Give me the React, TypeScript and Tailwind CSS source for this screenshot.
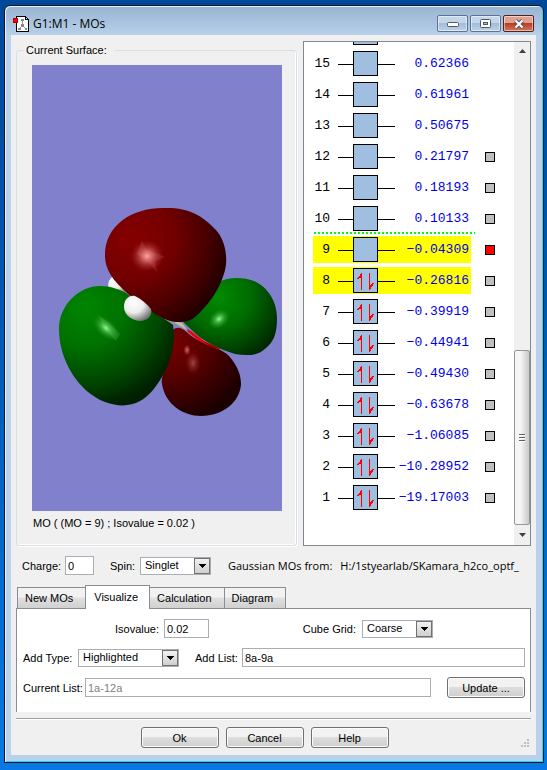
import { useState } from "react";
import type { ReactNode } from "react";

type Orbital = {
  id: number;
  energy: string;
  occupied?: boolean;
  highlighted?: boolean;
  surface?: "none" | "current";
};

const orbitals: Orbital[] = [
  { id: 15, energy: "0.62366" },
  { id: 14, energy: "0.61961" },
  { id: 13, energy: "0.50675" },
  { id: 12, energy: "0.21797", surface: "none" },
  { id: 11, energy: "0.18193", surface: "none" },
  { id: 10, energy: "0.10133", surface: "none" },
  { id: 9, energy: "−0.04309", highlighted: true, surface: "current" },
  { id: 8, energy: "−0.26816", occupied: true, highlighted: true, surface: "none" },
  { id: 7, energy: "−0.39919", occupied: true, surface: "none" },
  { id: 6, energy: "−0.44941", occupied: true, surface: "none" },
  { id: 5, energy: "−0.49430", occupied: true, surface: "none" },
  { id: 4, energy: "−0.63678", occupied: true, surface: "none" },
  { id: 3, energy: "−1.06085", occupied: true, surface: "none" },
  { id: 2, energy: "−10.28952", occupied: true, surface: "none" },
  { id: 1, energy: "−19.17003", occupied: true, surface: "none" },
];

const tabs = ["New MOs", "Visualize", "Calculation", "Diagram"];

function OrbitalIcon({ occupied }: { occupied?: boolean }) {
  return (
    <svg width="57" height="25" viewBox="0 0 57 25" className="shrink-0" shapeRendering="crispEdges">
      <path d="M0 13.5h57" stroke="#000" />
      <rect x="15.5" y="0.5" width="24" height="24" fill="#a0bfe0" stroke="#000" />
      {occupied && (
        <g fill="#f00">
          <path d="M23 5h1v17h-1zM22 6h1v4h-1zM21 8h1v2h-1zM20 9h1v2h-1zM19 10h1v1h-1z" />
          <path d="M31 5h1v17h-1zM32 17h1v4h-1zM33 16h1v3h-1zM34 15h1v3h-1zM35 15h1v1h-1z" />
        </g>
      )}
    </svg>
  );
}

function OrbitalRow({ orbital }: { orbital: Orbital }) {
  return (
    <li className="relative flex h-[31px] items-center pl-[9px]">
      <div
        className={`flex h-[27px] w-[158px] items-center ${
          orbital.highlighted ? "bg-[#ffff00]" : ""
        }`}
      >
        <span className="w-[17px] text-right">{orbital.id}</span>
        <span className="ml-2 flex">
          <OrbitalIcon occupied={orbital.occupied} />
        </span>
        <span className="flex-1 pr-0.5 text-right whitespace-nowrap text-[#0000e8]">
          {orbital.energy}
        </span>
      </div>
      {orbital.surface && (
        <input
          type="checkbox"
          aria-label={`Surface for MO ${orbital.id}`}
          defaultChecked={orbital.surface === "current"}
          className="ml-[14px] size-[10px] appearance-none border border-black bg-[#c0c0c0] checked:bg-[#ff0000]"
        />
      )}
      {/* HOMO / LUMO boundary */}
      {orbital.id === 10 && (
        <div className="absolute bottom-0 left-[10px] h-[2px] w-[161px] bg-[repeating-linear-gradient(90deg,#00ff00_0_2px,transparent_2px_4px)]" />
      )}
    </li>
  );
}

function Surface() {
  return (
    <svg width="250" height="446" viewBox="32 65 250 446" className="shrink-0">
      <defs>
        <radialGradient id="redTop" gradientUnits="userSpaceOnUse" cx="132" cy="238" r="100">
          <stop offset="0" stopColor="#850000" />
          <stop offset="0.4" stopColor="#740000" />
          <stop offset="0.75" stopColor="#480000" />
          <stop offset="1" stopColor="#200000" />
        </radialGradient>
        <radialGradient id="redBottom" gradientUnits="userSpaceOnUse" cx="172" cy="342" r="78">
          <stop offset="0" stopColor="#760000" />
          <stop offset="0.45" stopColor="#560000" />
          <stop offset="1" stopColor="#1c0000" />
        </radialGradient>
        <radialGradient id="greenLeft" gradientUnits="userSpaceOnUse" cx="86" cy="308" r="100">
          <stop offset="0" stopColor="#008600" />
          <stop offset="0.4" stopColor="#007000" />
          <stop offset="0.75" stopColor="#004500" />
          <stop offset="1" stopColor="#002000" />
        </radialGradient>
        <radialGradient id="greenRight" gradientUnits="userSpaceOnUse" cx="220" cy="297" r="68">
          <stop offset="0" stopColor="#008a00" />
          <stop offset="0.45" stopColor="#006c00" />
          <stop offset="1" stopColor="#002600" />
        </radialGradient>
        <radialGradient id="hydrogen" cx="0.35" cy="0.3" r="0.75">
          <stop offset="0" stopColor="#fff" />
          <stop offset="0.5" stopColor="#ececec" />
          <stop offset="1" stopColor="#707070" />
        </radialGradient>
        <radialGradient id="shineRed">
          <stop offset="0" stopColor="#ffa8a8" />
          <stop offset="0.35" stopColor="#e07070" stopOpacity="0.75" />
          <stop offset="1" stopColor="#a02020" stopOpacity="0" />
        </radialGradient>
        <radialGradient id="shineGreen">
          <stop offset="0" stopColor="#98ff98" />
          <stop offset="0.35" stopColor="#58c858" stopOpacity="0.7" />
          <stop offset="1" stopColor="#209020" stopOpacity="0" />
        </radialGradient>
      </defs>

      <circle cx="118" cy="285" r="10" fill="url(#hydrogen)" />
      <path
        d="M173 330C178 325 184 329 190 335C203 345 222 348 229 356C236 364 241 373 241 384C240 402 223 416 201 416C183 416 165 404 162 384C160 374 174 350 173 330Z"
        fill="url(#redBottom)"
      />
      <path
        d="M183 322C196 315 208 301 219 282C228 277 243 277 254 281C268 287 277 302 277 318C277 335 273 342 266 348C258 356 247 356 235 354C219 349 205 342 196 334Z"
        fill="url(#greenRight)"
      />
      <path
        d="M100 286C79 286 59 305 59 329C59 361 79 392 105 402C127 410 142 403 153 390C167 373 177 348 173 325C160 314 144 305 130 296C122 289 109 286 100 286Z"
        fill="url(#greenLeft)"
      />
      <path d="M151 311L172 321L183 322L188 330L185 330L171 323Z" fill="#909090" />
      <path d="M172 321L182 323L187 330L182 327Z" fill="#c0c0c0" />
      <path d="M187 329L191 331L204 341L221 349L214 348L199 341L188 332Z" fill="#f00000" />
      <path d="M201 340L207 343L222 349L213 348Z" fill="#900000" />
      <path
        d="M105 257C104 226 131 208 163 208C188 207 202 215 216 230C224 239 227 252 226 265C224 279 215 297 203 309C195 318 190 322 180 322C164 323 148 309 134 299C119 286 106 275 105 257Z"
        fill="url(#redTop)"
      />
      <path
        d="M124 307C124 299 129 295 135 296C141 299 147 304 151 309C153 316 147 321 140 321C134 321 124 316 124 307Z"
        fill="url(#hydrogen)"
      />
      <ellipse cx="147" cy="256" rx="17" ry="16" fill="url(#shineRed)" />
      <path d="M142 240l4 9l19 8l-10 4l2 11l-10-11l-10-7l3-9z" fill="#f09090" opacity="0.15" />
      <ellipse
        cx="106"
        cy="328"
        rx="16"
        ry="9"
        transform="rotate(42 106 328)"
        fill="url(#shineGreen)"
      />
      <path d="M98 315l11 8l11 11l-4 7l-10-10z" fill="#80d880" opacity="0.18" />
      <ellipse
        cx="219"
        cy="319"
        rx="12"
        ry="9"
        transform="rotate(-40 219 319)"
        fill="url(#shineGreen)"
      />
      <ellipse cx="187" cy="350" rx="4" ry="6" fill="url(#shineRed)" opacity="0.7" />
      <ellipse cx="193" cy="363" rx="8" ry="12" fill="url(#shineRed)" opacity="0.4" />
    </svg>
  );
}

function TitleIcon() {
  return (
    <svg width="16" height="16" viewBox="0 0 16 16" shapeRendering="crispEdges">
      <path d="M3.5 0.5h9l3 3v12h-12z" fill="#fff" stroke="#000" />
      <path d="M12 1h1v2h2v1h-3z" fill="#000" />
      <path d="M9.5 5v5M9 10l-3 3M10 10l3 3" stroke="#999" fill="none" />
      <path d="M8 3h3v2H8zM8 8h3v3H8zM5 12h3v2H5zM12 12h2v2h-2z" fill="#888" />
      <path d="M0.5 2.5h4v4h-4z" fill="#f00" stroke="#b00000" />
    </svg>
  );
}

function WindowButton({
  label,
  danger,
  children,
}: {
  label: string;
  danger?: boolean;
  children: ReactNode;
}) {
  return (
    <button
      aria-label={label}
      className={`flex h-[17px] w-[31px] items-center justify-center rounded-[2px] border shadow-[inset_0_0_0_1px_#ffffff80] ${
        danger
          ? "border-[#52201f] bg-linear-to-b from-[#e0a090] from-45% via-[#b83c24] via-50% to-[#d07858]"
          : "border-[#5d7391] bg-linear-to-b from-[#c4d6e9] from-45% via-[#a3bcd7] via-50% to-[#bcd2e8]"
      }`}
    >
      {children}
    </button>
  );
}

function Select({
  id,
  options,
  className,
}: {
  id: string;
  options: string[];
  className: string;
}) {
  return (
    <div className={`relative h-[18px] shrink-0 ${className}`}>
      <select
        id={id}
        className="h-full w-full appearance-none border border-[#abadb3] bg-white pb-0.5 pl-1"
      >
        {options.map((option) => (
          <option key={option}>{option}</option>
        ))}
      </select>
      <span className="pointer-events-none absolute top-px right-px flex size-4 items-center justify-center border border-[#707070] bg-linear-to-b from-[#f2f2f2] to-[#cfcfcf]">
        <svg width="7" height="4" viewBox="0 0 7 4" shapeRendering="crispEdges">
          <path d="M0 0h7v1H0zM1 1h5v1H1zM2 2h3v1H2zM3 3h1v1H3z" />
        </svg>
      </span>
    </div>
  );
}

function TextBox({
  id,
  value,
  className,
  disabled,
}: {
  id: string;
  value: string;
  className: string;
  disabled?: boolean;
}) {
  return (
    <input
      id={id}
      type="text"
      defaultValue={value}
      disabled={disabled}
      className={`h-[19px] min-w-0 border border-[#abadb3] bg-white px-0.5 disabled:text-[#808080] ${className}`}
    />
  );
}

function PushButton({ children }: { children: ReactNode }) {
  return (
    <button className="h-[21px] w-[78px] shrink-0 rounded-[3px] border border-[#707070] bg-linear-to-b from-[#f2f2f2] from-45% via-[#dddddd] via-50% to-[#cfcfcf] shadow-[inset_0_0_0_1px_#fcfcfc]">
      {children}
    </button>
  );
}

export default function App() {
  const [activeTab, setActiveTab] = useState("Visualize");

  return (
    <div className="min-h-screen bg-linear-to-b from-[#00489a] via-[#0058b4] via-40% to-[#0878e4] pt-[5px] pr-[3px] pb-[7px] pl-1 font-['Liberation_Sans',Arial,sans-serif] text-[11px] leading-[14px] text-black">
      <div className="rounded-t-md border border-[#101828] bg-linear-to-b from-[#98b4d2] to-[#b9d1ea] to-[30px] pr-[7px] pb-[7px] pl-1.5 shadow-[inset_1px_1px_0_#e4f0fa,inset_-1px_-1px_0_#30d0f0]">
        <header className="flex h-[29px] items-center pt-1.5 pr-0.5 pl-0.5">
          <TitleIcon />
          <h1 className="ml-1 flex-1 font-['Open_Sans',sans-serif] text-[12px]">G1:M1 - MOs</h1>
          <div className="flex gap-0.5">
            <WindowButton label="Minimize">
              <svg width="12" height="6" viewBox="0 0 12 6">
                <rect x="0.5" y="1.5" width="11" height="4" rx="1" fill="#fff" stroke="#535666" />
              </svg>
            </WindowButton>
            <WindowButton label="Maximize">
              <svg width="11" height="9" viewBox="0 0 11 9">
                <rect x="0.5" y="0.5" width="10" height="8" rx="1" fill="#fff" stroke="#535666" />
                <rect x="3.5" y="3.5" width="4" height="2" fill="#a3bcd7" stroke="#535666" />
              </svg>
            </WindowButton>
            <WindowButton label="Close" danger>
              <svg width="12" height="10" viewBox="0 0 12 10">
                <path d="M2.5 1.5l7 7M9.5 1.5l-7 7" stroke="#535666" strokeWidth="4" />
                <path d="M2.5 1.5l7 7M9.5 1.5l-7 7" stroke="#fff" strokeWidth="2" />
              </svg>
            </WindowButton>
          </div>
        </header>

        <main className="bg-[#f0f0f0] px-[5px] pt-1.5 pb-[7px]">
          <div className="flex gap-1.5">
            <fieldset className="mt-0.5 min-w-0 flex-1 rounded-[3px] border border-[#d5dfe5] pt-2 pr-[14px] pl-[15px] shadow-[inset_-1px_-1px_0_#fff,1px_1px_0_#fff]">
              <legend className="-ml-2 pr-2 pl-0.5">Current Surface:</legend>
              <div className="flex justify-center overflow-hidden bg-[#8080cc]">
                <Surface />
              </div>
              <p className="mt-[5px] pl-px">MO ( (MO = 9) ; Isovalue = 0.02 )</p>
            </fieldset>

            <section className="flex w-[228px] border border-[#828790] bg-white">
              <div className="flex-1 pb-8 font-['Liberation_Mono','Courier_New',monospace] text-[13px]">
                <div className="flex h-1.5 flex-col justify-end overflow-hidden pb-[3px] pl-[49px]">
                  <div className="h-[3px] w-[25px] border border-t-0 border-black bg-[#a0bfe0]" />
                </div>
                <ul>
                  {orbitals.map((orbital) => (
                    <OrbitalRow key={orbital.id} orbital={orbital} />
                  ))}
                </ul>
              </div>
              <div className="flex w-4 flex-col bg-[#f0f0f0]">
                <button aria-label="Scroll up" className="flex h-[17px] items-center justify-center">
                  <svg width="7" height="4" viewBox="0 0 7 4">
                    <path d="M3.5 0L7 4H0z" fill="#404040" />
                  </svg>
                </button>
                <div className="flex-1" />
                <div className="flex h-[175px] flex-col items-center justify-center gap-px rounded-[2px] border border-[#979797] bg-linear-to-r from-[#f5f5f5] from-40% to-[#c8c8cc]">
                  <span className="h-[2px] w-1.5 border-t border-[#606060] bg-white" />
                  <span className="h-[2px] w-1.5 border-t border-[#606060] bg-white" />
                  <span className="h-[2px] w-1.5 border-t border-[#606060] bg-white" />
                </div>
                <button
                  aria-label="Scroll down"
                  className="flex h-5 items-center justify-center"
                >
                  <svg width="7" height="4" viewBox="0 0 7 4">
                    <path d="M3.5 4L7 0H0z" fill="#404040" />
                  </svg>
                </button>
              </div>
            </section>
          </div>

          <div className="mt-2.5 flex h-[19px] items-center pl-1.5">
            <label htmlFor="charge" className="w-[43px] shrink-0">
              Charge:
            </label>
            <TextBox id="charge" value="0" className="w-[29px] shrink-0" />
            <label htmlFor="spin" className="ml-4 w-[30px] shrink-0">
              Spin:
            </label>
            <Select id="spin" options={["Singlet", "Triplet"]} className="w-[71px]" />
            <p className="ml-[17px] flex gap-2 font-['Open_Sans',sans-serif] whitespace-nowrap">
              <span>Gaussian MOs from:</span>
              <span>H:/1styearlab/SKamara_h2co_optf_</span>
            </p>
          </div>

          <div role="tablist" className="mt-2.5 flex h-[23px] items-end pl-px">
            {tabs.map((tab) => (
              <button
                key={tab}
                role="tab"
                aria-selected={activeTab === tab}
                onClick={() => setActiveTab(tab)}
                className={
                  activeTab === tab
                    ? "relative -mr-px -mb-px h-6 border border-b-0 border-[#898c95] bg-white pr-[11px] pb-0.5 pl-2"
                    : "-mr-px h-[21px] border border-b-0 border-[#898c95] bg-linear-to-b from-[#f2f2f2] from-45% via-[#e0e0e0] via-50% to-[#d0d0d0] pr-3 pl-[7px]"
                }
              >
                {tab}
              </button>
            ))}
          </div>

          <div
            role="tabpanel"
            className="flex flex-col gap-2.5 border border-b-0 border-[#898c95] bg-white pt-2.5 pr-[5px] pb-3.5 pl-1.5"
          >
            <div className="flex items-center px-[92px]">
              <label htmlFor="isovalue" className="w-[49px]">
                Isovalue:
              </label>
              <TextBox id="isovalue" value="0.02" className="w-[45px]" />
              <label htmlFor="grid" className="mr-1.5 ml-auto">
                Cube Grid:
              </label>
              <Select id="grid" options={["Coarse", "Medium", "Fine"]} className="w-[71px]" />
            </div>
            <div className="flex items-center">
              <label htmlFor="addType" className="w-[55px] whitespace-nowrap">
                Add Type:
              </label>
              <Select
                id="addType"
                options={["Highlighted", "Occupied", "Virtual"]}
                className="w-[101px]"
              />
              <label htmlFor="addList" className="ml-4 w-[47px] whitespace-nowrap">
                Add List:
              </label>
              <TextBox id="addList" value="8a-9a" className="flex-1" />
            </div>
            <div className="flex items-center">
              <label htmlFor="currentList" className="w-[62px] whitespace-nowrap">
                Current List:
              </label>
              <TextBox id="currentList" value="1a-12a" className="mr-4 flex-1" disabled />
              <PushButton>Update ...</PushButton>
            </div>
          </div>

          <hr className="mt-1.5 h-[2px] border-t border-[#a0a0a0] bg-white" />

          <footer className="mt-[7px] flex items-end">
            <div className="flex flex-1 justify-center gap-[7px]">
              <PushButton>Ok</PushButton>
              <PushButton>Cancel</PushButton>
              <PushButton>Help</PushButton>
            </div>
            <svg width="18" height="10" viewBox="0 0 18 10" shapeRendering="crispEdges">
              <path
                d="M14 1h2v2h-2zM11 4h2v2h-2zM14 4h2v2h-2zM8 7h2v2H8zM11 7h2v2h-2zM14 7h2v2h-2z"
                fill="#bfbfbf"
              />
            </svg>
          </footer>
        </main>
      </div>
    </div>
  );
}
